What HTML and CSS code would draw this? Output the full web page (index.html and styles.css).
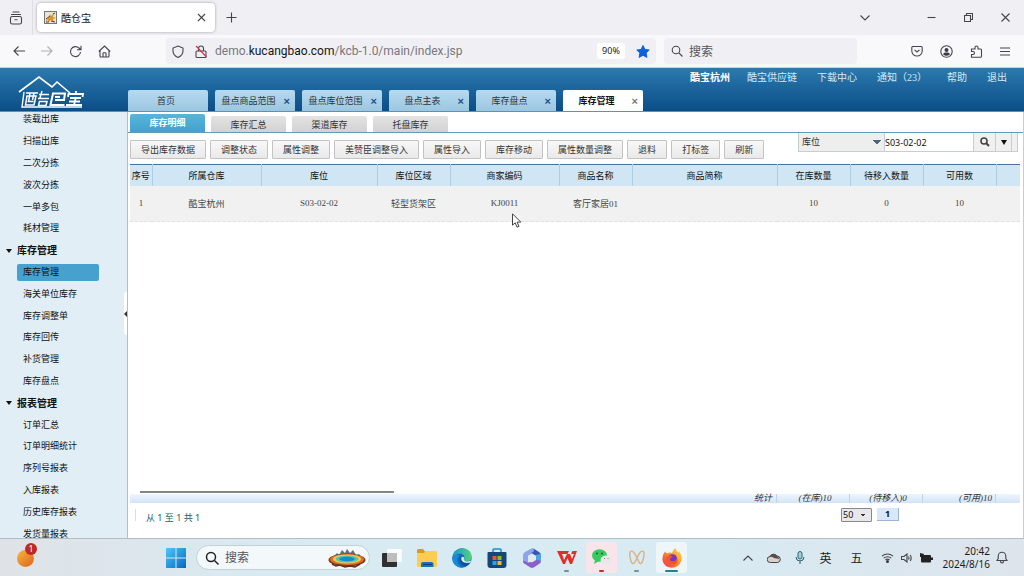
FILE: index.html
```html
<!DOCTYPE html>
<html lang="zh-CN">
<head>
<meta charset="utf-8">
<title>酷仓宝</title>
<link rel="stylesheet" href="styles.css">
</head>
<body>
<div class="desktop">
  <header class="tabstrip">
    <button class="icon-btn view-btn" aria-label="Firefox View"><svg width="14" height="14" viewBox="0 0 14 14" class="line"><path d="M3.500 1h7M2 3.500h10M3.300 5.500h7.400q1.800 0 1.800 1.800v3.900q0 1.800-1.800 1.800H3.300q-1.800 0-1.800-1.800V7.300q0-1.800 1.800-1.800zM5.500 8.800h3"/></svg></button>
    <div class="browser-tab">
      <svg class="favicon" width="13" height="13" viewBox="0 0 13 13"><rect x=".5" y=".5" width="12" height="12" fill="#e9e4d4" stroke="#77777a"/><path d="M2 9l3-3 1-3 1 2 3-3-1 4 3 1-3 1 1 3-3-2-3 2V8L2 11z" fill="#d7962c"/><path d="M2 8l4-3M7 10l4 1M2 11h3M9 3l2-1" stroke="#4b4636"/></svg>
      <span class="browser-tab-title">酷仓宝</span>
      <button class="icon-btn" aria-label="关闭标签页"><svg width="9" height="9" viewBox="0 0 9 9" class="line"><path d="M1 1l7 7M8 1L1 8"/></svg></button>
    </div>
    <button class="icon-btn new-tab" aria-label="新建标签页"><svg width="11" height="11" viewBox="0 0 11 11" class="line"><path d="M5.500 0.500v10M.5 5.500h10"/></svg></button>
    <div class="window-controls">
      <button class="icon-btn list-tabs" aria-label="列出标签页"><svg width="10" height="6" viewBox="0 0 10 6" class="line"><path d="M.5.5L5 5 9.500.5"/></svg></button>
      <button class="icon-btn" aria-label="最小化"><svg width="9" height="9" viewBox="0 0 9 9" class="line"><path d="M.5 4.500h8"/></svg></button>
      <button class="icon-btn" aria-label="还原"><svg width="9" height="9" viewBox="0 0 9 9" class="line"><path d="M.5 2.500h6v6h-6zM2.500 2.500v-2h6v6h-2"/></svg></button>
      <button class="icon-btn" aria-label="关闭"><svg width="9" height="9" viewBox="0 0 9 9" class="line"><path d="M.5.5l8 8M8.500.5l-8 8"/></svg></button>
    </div>
  </header>

  <div class="navbar">
    <div class="nav-buttons">
      <button class="icon-btn" aria-label="后退"><svg width="12" height="12" viewBox="0 0 12 12" class="line"><path d="M12 6H1M5.500 1.500L1 6l4.500 4.500"/></svg></button>
      <button class="icon-btn dim" aria-label="前进"><svg width="12" height="12" viewBox="0 0 12 12" class="line"><path d="M0 6h11M6.500 1.500L11 6l-4.500 4.500"/></svg></button>
      <button class="icon-btn" aria-label="刷新"><svg width="13" height="13" viewBox="0 0 13 13" class="line"><path d="M11.500 7A5 5 0 1 1 10 3l1.500 1.500M12 .8v4H8"/></svg></button>
      <button class="icon-btn" aria-label="主页"><svg width="13" height="13" viewBox="0 0 13 13" class="line"><path d="M.8 6.500L6.500 1l5.700 5.500M2 5.500V11q0 1 1 1h7q1 0 1-1V5.500M5 12V8.500q0-.8.8-.8h1.400q.8 0 .8.8V12"/></svg></button>
    </div>
    <div class="urlbar">
      <svg width="12" height="13" viewBox="0 0 12 13" class="line"><path d="M6 1l5 2v3c0 3.500-2 5.200-5 6.500C3 11.200 1 9.500 1 6V3z"/></svg>
      <svg width="12" height="13" viewBox="0 0 12 13" class="line"><path d="M3.500 6V3.500a2.500 2.500 0 0 1 5 0V6M2 6h8q1 0 1 1v4.500q0 1-1 1H2q-1 0-1-1V7q0-1 1-1z"/><path d="M1 1l10.500 11" stroke="#d8304b"/></svg>
      <span class="url">demo.<span class="url-domain">kucangbao.com</span>/kcb-1.0/main/index.jsp</span>
      <span class="zoom-level">90%</span>
      <svg width="14" height="13" viewBox="0 0 14 13"><path d="M7 .5l1.900 4 4.300.5-3.100 3 .8 4.400L7 10.300 3.100 12.400l.8-4.400L.8 5l4.300-.5z" fill="#0a62dc" stroke="#0a62dc" stroke-linejoin="round"/></svg>
    </div>
    <label class="searchbar"><svg width="12" height="12" viewBox="0 0 12 12" class="line"><circle cx="5" cy="5" r="3.800"/><path d="M8 8l3.500 3.500"/></svg><input class="search-input" type="text" placeholder="搜索"></label>
    <div class="nav-tools">
      <button class="icon-btn" aria-label="Pocket"><svg width="12" height="12" viewBox="0 0 12 12" class="line"><path d="M1.800 1.500h8.400q1 0 1 1V6a5.200 5 0 0 1-10.400 0V2.500q0-1 1-1zM3.500 4.800L6 7l2.500-2.200"/></svg></button>
      <button class="icon-btn" aria-label="账户"><svg width="13" height="13" viewBox="0 0 13 13" class="line"><circle cx="6.500" cy="6.500" r="5.700"/><circle cx="6.500" cy="5" r="2" fill="#3c3c45" stroke="none"/><path d="M3.200 9.500q0-2 2-2h2.600q2 0 2 2-3.300 2.500-6.600 0z" fill="#3c3c45" stroke="none"/></svg></button>
      <button class="icon-btn" aria-label="扩展"><svg width="13" height="13" viewBox="0 0 13 13" class="line"><path d="M1.500 12.200V9.500H3a1.500 1.500 0 0 0 0-3H1.500V4H5V2.500a1.500 1.500 0 0 1 3 0V4h2.500q1 0 1 1v6.200q0 1-1 1z"/></svg></button>
      <button class="icon-btn" aria-label="菜单"><svg width="10" height="9" viewBox="0 0 10 9" class="line"><path d="M0 1h10M0 4.500h10M0 8h10"/></svg></button>
    </div>
  </div>

  <div class="app-header">
    <a class="logo" href="#" aria-label="酷仓宝">
      <svg width="68" height="35" viewBox="0 0 68 35" fill="none" stroke="#fff"><path d="M1 17L21 2l13 10 5-5 13 11" stroke-width="1.600"/><path d="M6 17l-2 15h60" stroke-width="1.400"/><g stroke-width="1.500"><path d="M8 18h12M9 21h9l-2 9H7.500zM12 18l-1.500 9M16 18l-1.500 7M9.500 26.500h6M24 16l-2 7M21 19.500h10M20 23.500h11M21.500 26.500h7.500l-1 4h-7.500z"/><path d="M34 18.500h13l-1 6.500h-9M35 18.500l-2.500 11.500h14M37 22h5" stroke-width="2"/><path d="M50 22l.5-3H65l-.5 3M58 16v3M52 23h11M51 26.500h11M48 30h16M58 22l-2 8" stroke-width="1.800"/></g></svg>
    </a>
    <nav class="page-tabs">
      <div class="page-tab"><a href="#">首页</a></div>
      <div class="page-tab"><a href="#">盘点商品范围</a><button class="tab-close" aria-label="关闭">×</button></div>
      <div class="page-tab"><a href="#">盘点库位范围</a><button class="tab-close" aria-label="关闭">×</button></div>
      <div class="page-tab"><a href="#">盘点主表</a><button class="tab-close" aria-label="关闭">×</button></div>
      <div class="page-tab"><a href="#">库存盘点</a><button class="tab-close" aria-label="关闭">×</button></div>
      <div class="page-tab current"><a href="#">库存管理</a><button class="tab-close" aria-label="关闭">×</button></div>
    </nav>
    <nav class="user-links">
      <a class="company" href="#">酷宝杭州</a><a href="#">酷宝供应链</a><a href="#">下载中心</a><a href="#">通知（23）</a><a href="#">帮助</a><a href="#">退出</a>
    </nav>
  </div>

  <div class="app-body">
    <nav class="sidebar">
      <div class="menu">
        <a class="menu-item" href="#">装载出库</a>
        <a class="menu-item" href="#">扫描出库</a>
        <a class="menu-item" href="#">二次分拣</a>
        <a class="menu-item" href="#">波次分拣</a>
        <a class="menu-item" href="#">一单多包</a>
        <a class="menu-item" href="#">耗材管理</a>
        <a class="menu-group" href="#">库存管理</a>
        <a class="menu-item selected" href="#">库存管理</a>
        <a class="menu-item" href="#">海关单位库存</a>
        <a class="menu-item" href="#">库存调整单</a>
        <a class="menu-item" href="#">库存回传</a>
        <a class="menu-item" href="#">补货管理</a>
        <a class="menu-item" href="#">库存盘点</a>
        <a class="menu-group" href="#">报表管理</a>
        <a class="menu-item" href="#">订单汇总</a>
        <a class="menu-item" href="#">订单明细统计</a>
        <a class="menu-item" href="#">序列号报表</a>
        <a class="menu-item" href="#">入库报表</a>
        <a class="menu-item" href="#">历史库存报表</a>
        <a class="menu-item" href="#">发货量报表</a>
      </div>
      <button class="collapse" aria-label="收起菜单"></button>
    </nav>

    <main class="content">
      <nav class="sub-tabs">
        <a class="sub-tab current" href="#">库存明细</a><a class="sub-tab" href="#">库存汇总</a><a class="sub-tab" href="#">渠道库存</a><a class="sub-tab" href="#">托盘库存</a>
      </nav>
      <div class="toolbar">
        <div class="actions">
          <button class="action">导出库存数据</button><button class="action">调整状态</button><button class="action">属性调整</button><button class="action">美赞臣调整导入</button><button class="action">属性导入</button><button class="action">库存移动</button><button class="action">属性数量调整</button><button class="action">退料</button><button class="action">打标签</button><button class="action">刷新</button>
        </div>
        <form class="filter">
          <select class="filter-field" aria-label="查询字段"><option>库位</option></select>
          <input class="filter-value" type="text" aria-label="查询内容" value="S03-02-02">
          <button class="filter-btn" type="button" aria-label="查询"><svg width="10" height="10" viewBox="0 0 10 10" fill="none" stroke="#444" stroke-width="1.600"><circle cx="4" cy="4" r="3"/><path d="M6.200 6.200L9 9" stroke-width="2"/></svg></button>
          <button class="filter-btn more" type="button" aria-label="更多条件"></button>
          <span class="filter-end"></span>
        </form>
      </div>
      <table class="stock">
        <colgroup><col class="c-index"><col class="c-house"><col class="c-place"><col class="c-narrow"><col class="c-code"><col class="c-narrow"><col class="c-short"><col class="c-narrow"><col class="c-narrow"><col class="c-narrow"><col></colgroup>
        <thead><tr><th>序号</th><th>所属仓库</th><th>库位</th><th>库位区域</th><th>商家编码</th><th>商品名称</th><th>商品简称</th><th>在库数量</th><th>待移入数量</th><th>可用数</th><th></th></tr></thead>
        <tbody><tr><td>1</td><td>酷宝杭州</td><td>S03-02-02</td><td>轻型货架区</td><td>KJ0011</td><td>客厅家居01</td><td></td><td>10</td><td>0</td><td>10</td><td></td></tr></tbody>
      </table>
      <div class="scroll-track"><div class="scroll-thumb"></div></div>
      <div class="totals"><span class="total label">统计</span><span class="total">(在库)10</span><span class="total">(待移入)0</span><span class="total last">(可用)10</span></div>
      <div class="pager">
        <div class="pager-info"><span class="pager-text">从 1 至 1 共 1</span></div>
        <select class="page-size" aria-label="每页条数"><option>50</option></select>
        <button class="page-number">1</button>
      </div>
    </main>
  </div>

  <footer class="taskbar">
    <button class="weather" aria-label="小组件"><span class="weather-ball"></span><span class="badge">1</span></button>
    <button class="task start" aria-label="开始"><svg width="20" height="20" viewBox="0 0 20 20"><defs><linearGradient id="win" x2="1" y2="1"><stop stop-color="#4cc8f5"/><stop offset="1" stop-color="#0568c4"/></linearGradient></defs><path d="M0 0h9.500v9.500H0zM10.500 0H20v9.500h-9.500zM0 10.500h9.500V20H0zM10.500 10.500H20V20h-9.500z" fill="url(#win)"/></svg></button>
    <label class="task-search"><svg width="14" height="14" viewBox="0 0 14 14" fill="none" stroke="#222" stroke-width="1.500"><circle cx="6" cy="6" r="4.500"/><path d="M9.500 9.500l4 4"/></svg><input class="search-input" type="text" placeholder="搜索">
      <svg width="38" height="20" viewBox="0 0 38 20"><path d="M4 10l5-5 2 2 3-5 3 3 2-4 3 4 3-3 3 5 3-1 4 5z" fill="#60707c"/><ellipse cx="19" cy="12" rx="18.500" ry="6.500" fill="#713a25"/><ellipse cx="19" cy="11.500" rx="17" ry="5.500" fill="#e06c25"/><ellipse cx="19" cy="11" rx="14" ry="4.500" fill="#f2cb4c"/><ellipse cx="19" cy="11" rx="11.500" ry="3.500" fill="#50c7b1"/><ellipse cx="19" cy="11" rx="8" ry="2.200" fill="#168ad0"/><path d="M4 16l4 2 4-1 5 2 5-1 5 1 5-3" stroke="#653020" fill="none" stroke-width="1.500"/></svg></label>
    <div class="tasks">
      <button class="task" aria-label="任务视图"><svg width="20" height="20" viewBox="0 0 20 20"><rect y="5" width="15" height="14" rx="1" fill="#303030"/><rect x="5" y="1" width="15" height="13" rx="1" fill="#fff" opacity=".85"/><path d="M5 5h10v9H5z" fill="#bdbdbd"/></svg></button>
      <button class="task" aria-label="文件资源管理器"><svg width="20" height="18" viewBox="0 0 20 18"><path d="M0 1.500Q0 0 1.500 0H6l2 2.500V6H0z" fill="#d79a1e"/><path d="M0 4h7l1.500-2H19q1 0 1 1v14q0 1-1 1H1q-1 0-1-1z" fill="#fccd51"/><path d="M4 18v-3q0-2 2-2h8.500q2 0 2 2v3z" fill="#1672b9"/><path d="M6 15.500h9" stroke="#0c4478"/></svg></button>
      <button class="task" aria-label="Edge"><svg width="20" height="20" viewBox="0 0 20 20"><defs><linearGradient id="edge" x2="1"><stop stop-color="#1696d5"/><stop offset="1" stop-color="#55d27a"/></linearGradient></defs><circle cx="10" cy="10" r="9.700" fill="#1468b8"/><path d="M.3 10C1 2 8 0 11.500.4 17 .8 19.700 5 19.700 8.500c0 3.500-2.500 5-5 5-3 0-3.500-1.500-2.700-2.800C14 6 6 3 .3 10z" fill="url(#edge)"/><path d="M8 7.500C4 9 4 16 10.500 19.600 5 20 0 16 .3 10 2 6.500 5.500 6.300 8 7.500z" fill="#168ad4"/><path d="M9 9c-1 4 3 7.500 9 5.500-1.500 2-3 3-4.500 3.500C8 17 6.500 12 9 9z" fill="#124f9a"/><path d="M9.500 9.500c1-1.500 3-.5 2.500 1-.8 1.600.8 3 3.500 3 1.500 0 3-.6 3.500-1.200l-.5 2.200C12 16 8.500 13 9.500 9.500z" fill="#d9ebf2"/></svg></button>
      <button class="task" aria-label="应用商店"><svg width="20" height="20" viewBox="0 0 20 20"><path d="M6 5V2q0-1 1-1h6q1 0 1 1v3" fill="none" stroke="#1c8cd2" stroke-width="1.500"/><path d="M.5 5q0-1 1-1h17q1 0 1 1v12q0 3-3 3h-13q-3 0-3-3z" fill="#154878"/><path d="M5.500 8H9.500v4h-4z" fill="#f05430"/><path d="M10.500 8h4v4h-4z" fill="#82bf2b"/><path d="M5.500 13h4v4h-4z" fill="#22a8ea"/><path d="M10.500 13h4v4h-4z" fill="#fcbb22"/></svg></button>
      <button class="task" aria-label="Microsoft 365"><svg width="18" height="20" viewBox="0 0 18 20"><path d="M8.500.5L2 4Q0 5 0 7.500V13q0 2 2 3l3-2V8l7-4.500q-.5-4-3.500-3z" fill="#8ba4ea"/><path d="M10.500.5L16 4q2 1 2 3.500V13l-6-2V7.500L8 5q4-1 2.500-4.500z" fill="#3a55b5"/><path d="M0 12.500q0 2.500 2 3.500l5 3.300q2 1 4 0l5-3.300q2-1 2-3.500l-5-2-5 3.500-3 .5z" fill="#8a5fc8"/><path d="M18 6v7l-6-2V7z" fill="#4aa6df"/><path d="M5 8l4-2.500L13 8v4l-4 2.500L5 12z" fill="#dceaf3"/></svg></button>
      <button class="task running" aria-label="WPS"><svg width="20" height="15" viewBox="0 0 20 15"><path d="M0 1h12l-1.500 3H5l2 6 3-6h3l2 5 2-5h-3l1.500-3H20l-5 13h-2l-2.500-6L8 14H6z" fill="#df3026"/></svg></button>
      <button class="task running alert" aria-label="微信"><svg width="20" height="17" viewBox="0 0 20 17"><ellipse cx="7.500" cy="6.500" rx="7.500" ry="6.300" fill="#38ca61"/><path d="M3 11l-1 4 5-3z" fill="#38ca61"/><circle cx="5" cy="4.500" r="1" fill="#116633"/><circle cx="10" cy="4.500" r="1" fill="#116633"/><ellipse cx="14" cy="11" rx="5.500" ry="4.600" fill="#e8e8e8"/><path d="M15 14l3 3v-4z" fill="#e8e8e8"/><path d="M12 9.500h1M15.500 9.500h1" stroke="#888"/></svg></button>
      <button class="task running" aria-label="蝴蝶"><svg width="16" height="15" viewBox="0 0 16 15" fill="none" stroke="#dcb184" stroke-width="1.400"><path d="M8 8C6 3 3 0 1.500 1.500 0 3.500 1 10 3 13c2 2 3-1 5-5 2-5 4.500-8 6.500-6.500 1.500 2-.3 9-2 11.500C10.500 15 10 12 8 8z"/></svg></button>
      <button class="task running active" aria-label="Firefox"><svg width="20" height="20" viewBox="0 0 20 20"><defs><linearGradient id="fox" x1="1" x2="0" y2="1"><stop stop-color="#ffe34a"/><stop offset=".5" stop-color="#ff8a27"/><stop offset="1" stop-color="#ef2858"/></linearGradient></defs><path d="M3 3.500l2 2Q8 4 10 5q1-3.500 3.500-5 .5 3 3 4.500l.5-1.500q4 5 2 10.500-2.500 6-9 6.300Q3 19.500 1 14-.8 8.500 3 3.500z" fill="url(#fox)"/><circle cx="10.500" cy="10.800" r="4.600" fill="#7337bd"/><path d="M4 9q4-3 7 0-2 0-3 2 0 3 4 2 3-1 3-4 2 7-4 8-7 0-7-8z" fill="#f55432"/></svg></button>
    </div>
    <div class="tray">
      <button class="icon-btn tray-item" aria-label="显示隐藏的图标"><svg width="10" height="6" viewBox="0 0 10 6" class="line"><path d="M.5 5.500L5 1l4.500 4.500"/></svg></button>
      <button class="icon-btn tray-item" aria-label="OneDrive"><svg width="14" height="10" viewBox="0 0 14 10"><path d="M3.500 9.500a3 3 0 0 1-.5-6A4 4 0 0 1 10 3a3.300 3.300 0 0 1 .8 6.500z" fill="#d6d0cf" stroke="#4a4140"/><path d="M2 4q3-1 5 1l5 1V5L9 2 5 1z" fill="#564b49"/></svg></button>
      <button class="icon-btn tray-item" aria-label="麦克风"><svg width="10" height="13" viewBox="0 0 10 13" fill="none" stroke="#27606c"><rect x="3" y=".5" width="4" height="7.500" rx="2" fill="#9ed3dc"/><path d="M1 6a4 4 0 0 0 8 0M5 10v3"/></svg></button>
      <button class="icon-btn tray-item ime">英</button>
      <button class="icon-btn tray-item ime wubi">五</button>
      <button class="icon-btn status" aria-label="网络和音量"><svg width="13" height="11" viewBox="0 0 13 11" class="line"><path d="M1 4.200a8 8 0 0 1 11 0M2.700 6.200a5.500 5.500 0 0 1 7.600 0M4.500 8a3 3 0 0 1 4 0"/><circle cx="6.500" cy="9.500" r="1" fill="#222"/></svg><svg width="12" height="10" viewBox="0 0 12 10" class="line"><path d="M.5 3.500H3L6 1v8L3 6.500H.5zM7.500 3.500q1 1.500 0 3M9.200 2q2 3 0 6"/></svg><svg width="13" height="10" viewBox="0 0 13 10"><rect x="1" y="2" width="10" height="7.500" rx="1" fill="#222"/><path d="M11 4.500h2v2.500h-2zM0 0l4 1-1 3H0z" fill="#222"/></svg></button>
      <button class="clock"><time>20:42</time><time>2024/8/16</time></button>
      <button class="icon-btn bell" aria-label="通知"><svg width="12" height="13" viewBox="0 0 12 13" class="line"><path d="M1 9.500l1.200-2V5a3.800 3.800 0 0 1 7.600 0v2.500l1.200 2zM4.500 10q0 2 1.500 2t1.500-2"/></svg></button>
    </div>
  </footer>

  <svg class="cursor" width="10" height="15" viewBox="0 0 10 15"><path d="M.5.800v11.400l2.700-2.400 1.800 4.400 2-.8-1.900-4.300h3.700z" fill="#fff" stroke="#444"/></svg>
</div>
</body>
</html>
```
FILE: styles.css
```css
* { box-sizing: border-box; }

body {
  margin: 0;
  font-family: "Liberation Serif", "Noto Sans CJK SC", sans-serif;
  font-size: 9px;
  color: #333;
}

a { color: inherit; text-decoration: none; }
button, input, select { margin: 0; padding: 0; font: inherit; color: inherit; }
button { border: 0; background: none; }
svg { display: block; flex: none; }

.line { fill: none; stroke: #45454c; stroke-width: 1.1; }
.icon-btn { display: flex; align-items: center; justify-content: center; }
.dim { opacity: .4; }

.desktop {
  position: relative;
  display: flex;
  flex-direction: column;
  height: 100vh;
  overflow: hidden;
}

/* Browser chrome */
.tabstrip {
  display: flex;
  align-items: center;
  height: 35px;
  flex: none;
  background: #f0f0f4;
  font-family: "Noto Sans", "Noto Sans CJK SC", sans-serif;
}
.view-btn { width: 33px; height: 35px; border-right: 1px solid #dddde2; }
.browser-tab {
  display: flex;
  align-items: center;
  width: 178px;
  height: 29px;
  margin-left: 4px;
  padding: 0 9px 0 7px;
  border-radius: 4px;
  background: #fff;
  box-shadow: 0 0 3px #9a9aa2;
}
.browser-tab-title { flex: 1; margin-left: 4px; font-size: 10px; color: #15141a; }
.new-tab { margin-left: 11px; }
.window-controls { display: flex; align-items: center; gap: 28px; margin-left: auto; padding-right: 14px; }
.list-tabs { margin-right: 29px; }

.navbar {
  display: flex;
  align-items: center;
  height: 33px;
  flex: none;
  padding: 0 14px 0 13px;
  border-bottom: 1px solid #b5d9e7;
  background: #f9f9fb;
  font-family: "Noto Sans", "Noto Sans CJK SC", sans-serif;
}
.nav-buttons { display: flex; gap: 16px; width: 153px; }
.urlbar {
  display: flex;
  align-items: center;
  flex: 493;
  height: 26px;
  gap: 11px;
  padding: 0 6px;
  border-radius: 4px;
  background: #f0f0f4;
}
.url { flex: 1; margin-left: -3px; font-family: Roboto, sans-serif; font-size: 12px; color: #77777d; white-space: nowrap; }
.url-domain { color: #15141a; }
.zoom-level { padding: 0 5px; border-radius: 3px; background: #fff; font-size: 9px; line-height: 16px; color: #222; }
.searchbar {
  display: flex;
  align-items: center;
  flex: 192;
  height: 26px;
  gap: 6px;
  margin-left: 8px;
  padding-left: 7px;
  border-radius: 4px;
  background: #f0f0f4;
}
.search-input { flex: 1; min-width: 0; width: 0; border: 0; background: none; font-size: 12px; }
.search-input::placeholder { color: #55555c; opacity: 1; }
.nav-tools { display: flex; align-items: center; gap: 17px; margin-left: 54px; }

/* Application header */
.app-header {
  display: flex;
  height: 44px;
  flex: none;
  border-bottom: 1px solid #5b93b2;
  background: linear-gradient(#2b7aae, #0b4d88);
}
.logo { width: 128px; padding: 7px 0 0 18px; }
.page-tabs { display: flex; align-items: flex-end; gap: 7px; }
.page-tab {
  position: relative;
  width: 80px;
  height: 21px;
  border-radius: 2px 2px 0 0;
  background: linear-gradient(#b6daf0, #9cc7e0);
  line-height: 23px;
  text-align: center;
}
.page-tab:not(:first-child) { padding-right: 13px; }
.page-tab:first-child { padding-right: 4px; }
.page-tab.current { background: #fff; color: #111; font-weight: bold; }
.tab-close { position: absolute; right: 5px; top: 0; font: bold 11px/22px "Liberation Sans", sans-serif; color: #1e4f8c; }
.current .tab-close { color: #777; }
.user-links {
  display: flex;
  gap: 20px;
  margin-left: auto;
  padding-right: 17px;
  font-size: 10px;
  line-height: 19px;
  color: #d7e8f3;
  white-space: nowrap;
}
.company { margin-right: -3px; font-weight: bold; color: #fff; }

/* Sidebar */
.app-body { display: flex; flex: 1; min-height: 0; }
.sidebar {
  position: relative;
  display: flex;
  width: 128px;
  flex: none;
  overflow: hidden;
  border-right: 1px solid #afbfca;
  background: #e1eef5;
}
.menu {
  display: grid;
  grid-auto-rows: 1fr;
  align-items: center;
  flex: 1;
  margin: -3px 28px -7px 17px;
  color: #111;
}
.menu-item { padding-left: 6px; line-height: 17px; }
.menu-item.selected { border-radius: 2px; background: #47a1cf; }
.menu-group { display: flex; align-items: center; margin-left: -11px; font-size: 10px; font-weight: bold; line-height: 17px; }
.menu-group::before { content: ""; margin-right: 5px; border: 3px solid transparent; border-top: 4px solid #111; border-bottom: 0; }
.collapse {
  position: absolute;
  right: 0;
  top: 180px;
  width: 3px;
  height: 43px;
  border-radius: 3px 0 0 3px;
  background: #fff;
}
.collapse::before { content: ""; display: block; border: 3px solid transparent; border-right-color: #333; border-left: 0; }

/* Content */
.content { display: flex; flex-direction: column; flex: 1; min-width: 0; padding: 2px 3px 0 2px; border-right: 1px solid #c5ced6; background: #fff; }
.sub-tabs {
  display: flex;
  align-items: flex-end;
  gap: 6px;
  height: 19px;
  flex: none;
  margin: 0 -3px 0 -2px;
  padding-left: 2px;
  border-bottom: 1px solid #5c9fb5;
}
.sub-tab { width: 75px; height: 16px; border-radius: 2px 2px 0 0; background: linear-gradient(#e3e3e3, #d2d2d2); line-height: 18px; text-align: center; }
.sub-tab.current { height: 18px; background: linear-gradient(#57b5dc, #43a2cd); color: #fff; font-weight: bold; }
.toolbar { display: flex; justify-content: space-between; height: 31px; flex: none; }
.actions { display: flex; gap: 4px; padding-top: 7px; }
.action {
  height: 19px;
  padding: 0 10px;
  border: 1px solid #c3c3c3;
  border-radius: 1px;
  background: linear-gradient(#f8f8f8, #e9e9e9);
  white-space: nowrap;
}
.filter { display: flex; height: 19px; padding-right: 2px; }
.filter-field {
  width: 87px;
  padding-left: 3px;
  border: 1px solid #c8cdd0;
  border-top: 0;
  border-radius: 0;
  appearance: none;
  background: linear-gradient(225deg, transparent 50%, #50657d 50%) right 3px top 7px / 4px 4px no-repeat, linear-gradient(135deg, transparent 50%, #50657d 50%) right 7px top 7px / 4px 4px no-repeat, #eee;
  background: conic-gradient(from -45deg at 50% 100%, #50657d 90deg, transparent 0) right 3px top 7px / 8px 4px no-repeat, #eee;
}
.filter-value { width: 88px; border: 1px solid #c8cdd0; border-width: 0 0 1px; font-family: "Noto Sans", sans-serif; color: #111; }
.filter-btn { display: flex; align-items: center; justify-content: center; width: 23px; border: 1px solid #ccc; border-width: 0 1px 1px; background: #f0f0f0; }
.filter-btn.more { width: 16px; border-left: 0; }
.more::before { content: ""; border: 3px solid transparent; border-top: 5px solid #111; border-bottom: 0; }
.filter-end { width: 6px; border: 1px solid #ccc; border-width: 0 1px 1px 0; background: #f0f0f0; }

.stock { width: 100%; table-layout: fixed; border-collapse: collapse; border-top: 1px solid #4e739b; text-align: center; }
.c-index { width: 22px; }
.c-house { width: 109px; }
.c-place { width: 116px; }
.c-narrow { width: 73px; }
.c-code { width: 109px; }
.c-short { width: 145px; }
.stock th { height: 21px; padding: 0; border-right: 1px solid #abcfe0; background: #d0e6f5; color: #111; font-weight: normal; }
.stock th:last-child { border-right: 0; }
.stock td { height: 36px; padding: 0; border-bottom: 1px dashed #e1e1e1; background: #f1f1f1; color: #444; }

.scroll-track { margin-top: auto; padding: 0 0 1px 10px; }
.scroll-thumb { width: 254px; height: 2px; background: #858585; }
.totals {
  display: flex;
  justify-content: flex-end;
  height: 9px;
  flex: none;
  padding-right: 24px;
  background: linear-gradient(#edf5fe, #d3e4f7);
  font-style: italic;
  line-height: 9px;
}
.total { width: 73px; padding-left: 4px; border-right: 1px solid #bdd3e6; text-align: center; white-space: nowrap; }
.total.label { padding-right: 4px; text-align: right; }
.total.last { padding-right: 3px; text-align: right; }
.pager { display: flex; align-items: center; gap: 5px; height: 35px; flex: none; padding: 0 121px 12px 5px; }
.pager-info { display: flex; align-items: center; flex: 1; height: 12px; border-left: 1px solid #ddd; }
.pager-text { padding: 5px 0 0 10px; font-family: "Noto Sans", "Noto Sans CJK SC", sans-serif; color: #1e5d68; white-space: nowrap; }
.page-size {
  width: 31px;
  height: 14px;
  padding-left: 1px;
  border: 1px solid #888;
  border-radius: 1px;
  appearance: none;
  background:
    linear-gradient(45deg, transparent 45%, #222 45% 65%, transparent 65%) right 7px top 5px / 3px 3px no-repeat,
    linear-gradient(-45deg, transparent 45%, #222 45% 65%, transparent 65%) right 4px top 5px / 3px 3px no-repeat,
    #e8e8ec;
  background:
    conic-gradient(from -45deg at 50% 100%, #333 90deg, transparent 0) right 5px top 5px / 6px 3px no-repeat,
    #e8e8ec;
  font-family: "Noto Sans", sans-serif;
  line-height: 12px;
  color: #111;
}
.page-number { width: 22px; height: 13px; border: 1px solid #9cb6d2; border-width: 0 1px 1px 0; background: #d8e8fa; font: bold 9px/12px "Noto Sans", sans-serif; color: #111; }

/* Taskbar */
.taskbar {
  display: flex;
  align-items: center;
  height: 38px;
  flex: none;
  border-top: 1px solid #b1bcc4;
  background: linear-gradient(90deg, #dfe3e7, #d8eaf2 30%, #d8eaf2 70%, #dde4ec);
  font-family: "Noto Sans", "Noto Sans CJK SC", sans-serif;
  color: #1c1c1c;
}
.weather { position: relative; width: 24px; height: 24px; margin: -4px 0 0 15px; }
.weather-ball { display: block; width: 17px; height: 17px; margin: 5px 0 0 2px; border-radius: 9px; background: linear-gradient(135deg, #f6b53a, #dc6420); }
.badge { position: absolute; left: 10px; top: -1px; width: 12px; border-radius: 6px; background: #bd2b23; color: #fff; font-size: 9px; line-height: 12px; text-align: center; }
.task { position: relative; display: flex; align-items: center; justify-content: center; width: 31px; height: 31px; border-radius: 3px; }
.start { margin-left: 121px; }
.task-search { display: flex; align-items: center; gap: 6px; width: 174px; height: 25px; margin-left: 5px; padding: 0 3px 0 8px; border: 1px solid #c4d0d8; border-radius: 13px; background: #f3f8fb; }
.tasks { display: flex; gap: 4px; margin-left: 6px; }
.alert { background: #f9e4e9; }
.active { background: #eef6fa; }
.running::after { content: ""; position: absolute; left: 13px; bottom: 1px; width: 5px; height: 2px; border-radius: 1px; background: #7f8c94; }
.alert::after { background: #b7352d; }
.active::after { left: 9px; width: 13px; background: #26808f; }
.tray { display: flex; align-items: center; margin-left: auto; padding-right: 16px; }
.tray-item { width: 26px; height: 24px; }
.ime { font-size: 12px; }
.wubi { width: 36px; }
.status { gap: 7px; margin-left: 6px; }
.clock { display: flex; flex-direction: column; align-items: flex-end; margin-left: 10px; font-size: 10px; line-height: 13px; }
.bell { margin-left: 6px; }

.cursor { position: absolute; left: 512px; top: 213px; }
```
